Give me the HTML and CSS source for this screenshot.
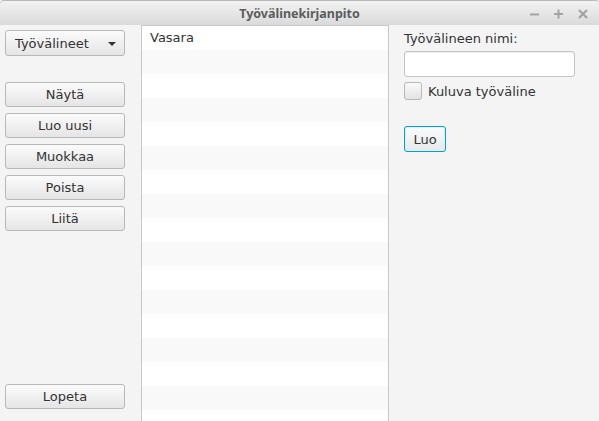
FILE: index.html
```html
<!DOCTYPE html>
<html>
<head>
<meta charset="utf-8">
<link rel="stylesheet" href="styles.css">
</head>
<body>
<div class="window">
  <div class="titlebar">
    <div class="title">Työvälinekirjanpito</div>
    <div class="controls">
      <svg width="10" height="10" viewBox="0 0 10 10"><path d="M0 5.5h9" stroke="#a3a3a3" stroke-width="2"/></svg>
      <svg width="10" height="10" viewBox="0 0 10 10"><path d="M0 5h9M4.5 0.5v9" stroke="#a3a3a3" stroke-width="2"/></svg>
      <svg width="10" height="10" viewBox="0 0 10 10"><path d="M1 1l8 8M9 1l-8 8" stroke="#a3a3a3" stroke-width="2.2"/></svg>
    </div>
  </div>
  <div class="main">
    <div class="left">
      <div class="combo"><span>Työvälineet</span><span class="arrow"></span></div>
      <div class="btn-group">
        <div class="btn">Näytä</div>
        <div class="btn">Luo uusi</div>
        <div class="btn">Muokkaa</div>
        <div class="btn">Poista</div>
        <div class="btn">Liitä</div>
      </div>
      <div class="btn quit">Lopeta</div>
    </div>
    <div class="list">
      <div class="row">Vasara</div>
      <div class="row odd"></div>
      <div class="row"></div>
      <div class="row odd"></div>
      <div class="row"></div>
      <div class="row odd"></div>
      <div class="row"></div>
      <div class="row odd"></div>
      <div class="row"></div>
      <div class="row odd"></div>
      <div class="row"></div>
      <div class="row odd"></div>
      <div class="row"></div>
      <div class="row odd"></div>
      <div class="row"></div>
      <div class="row odd"></div>
      <div class="row"></div>
    </div>
    <div class="right">
      <div class="label">Työvälineen nimi:</div>
      <div class="field"></div>
      <div class="check-row"><span class="box"></span><span>Kuluva työväline</span></div>
      <div class="btn focused">Luo</div>
    </div>
  </div>
</div>
</body>
</html>
```
FILE: styles.css
```css
html, body {
  margin: 0;
  padding: 0;
  width: 599px;
  height: 421px;
  overflow: hidden;
  background: #f4f4f4;
}
.window {
  width: 599px;
  height: 421px;
  display: flex;
  flex-direction: column;
  font-family: "DejaVu Sans", sans-serif;
  font-size: 13px;
  color: #333;
}
.titlebar {
  height: 24px;
  flex: none;
  position: relative;
  border-top: 1px solid #b9b9b9;
  border-radius: 4px 4px 0 0;
  background: linear-gradient(to bottom, #f2f2f2 0%, #e4e4e4 60%, #dadada 100%);
  display: flex;
  align-items: center;
  justify-content: center;
}
.title {
  font-family: "Noto Sans", "DejaVu Sans", sans-serif;
  font-weight: bold;
  font-size: 12.5px;
  color: #5c5c5c;
  margin-top: 1px;
}
.controls {
  position: absolute;
  right: 11px;
  top: 8px;
  display: flex;
  gap: 14px;
}
.main {
  flex: 1;
  display: flex;
  min-height: 0;
}
.left {
  width: 141px;
  flex: none;
  box-sizing: border-box;
  padding: 5px 0 12px 5px;
  display: flex;
  flex-direction: column;
}
.combo {
  width: 120px;
  height: 26px;
  box-sizing: border-box;
  border: 1px solid #b8b8b8;
  border-radius: 3px;
  background: linear-gradient(to bottom, #fbfbfb, #e5e5e5);
  display: flex;
  align-items: center;
  justify-content: space-between;
  padding: 0 8px 0 9px;
}
.arrow {
  width: 0;
  height: 0;
  border-left: 4px solid transparent;
  border-right: 4px solid transparent;
  border-top: 4px solid #333;
  margin-top: 1px;
}
.btn-group {
  margin-top: 26px;
  display: flex;
  flex-direction: column;
  gap: 6px;
}
.btn {
  width: 120px;
  height: 25px;
  box-sizing: border-box;
  border: 1px solid #b8b8b8;
  border-radius: 3px;
  background: linear-gradient(to bottom, #fbfbfb, #e5e5e5);
  display: flex;
  align-items: center;
  justify-content: center;
}
.quit {
  margin-top: auto;
}
.list {
  width: 248px;
  flex: none;
  box-sizing: border-box;
  border: 1px solid #c8c8c8;
  border-bottom: none;
  background: #fff;
  overflow: hidden;
}
.row {
  height: 24px;
  line-height: 24px;
  padding-left: 8px;
  background: #fff;
  flex: none;
}
.row.odd {
  background: #f9f9f9;
}
.right {
  flex: 1;
  padding: 6px 0 0 15px;
  display: flex;
  flex-direction: column;
  align-items: flex-start;
}
.label {
  line-height: 16px;
}
.field {
  margin-top: 4px;
  width: 171px;
  height: 26px;
  box-sizing: border-box;
  border: 1px solid #c4c4c4;
  border-radius: 3px;
  background: #fff;
  box-shadow: inset 0 1px 1px #ececec;
}
.check-row {
  margin-top: 5px;
  display: flex;
  align-items: center;
  gap: 6px;
  height: 18px;
}
.box {
  width: 18px;
  height: 18px;
  box-sizing: border-box;
  border: 1px solid #b8b8b8;
  border-radius: 3px;
  background: linear-gradient(to bottom, #f9f9f9, #e3e3e3);
}
.btn.focused {
  margin-top: 26px;
  width: 42px;
  height: 26px;
  border: 1px solid #039ed3;
  box-shadow: inset 0 0 0 1px #dff1f9;
  background: linear-gradient(to bottom, #fbfbfb, #e7e9ea);
}
```
